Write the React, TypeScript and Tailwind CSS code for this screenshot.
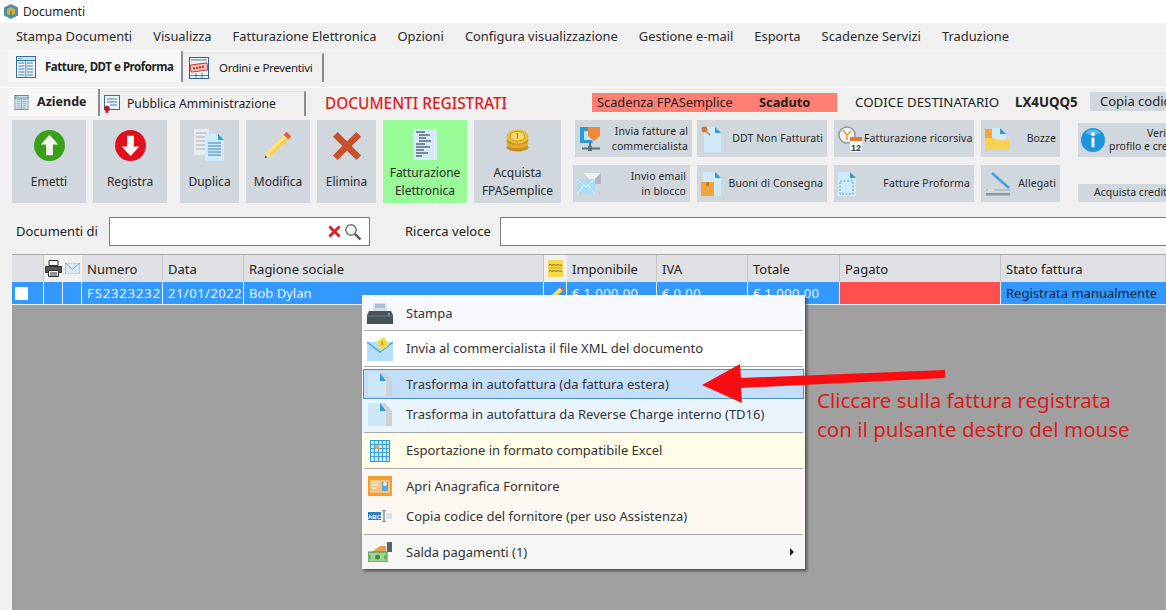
import React from 'react';

// --- icons ---
const Sheet = ({ size = 22, accent = '#2f6f9f' }: { size?: number; accent?: string }) => (
  <svg width={size} height={size} viewBox="0 0 22 22">
    <rect x="1.5" y="0.5" width="19" height="21" fill="#eef5fa" stroke={accent} />
    <rect x="1.5" y="0.5" width="19" height="4" fill="#cfe3f0" stroke={accent} />
    <path d="M3 2.500h4" stroke="#6cbf6c" />
    <path d="M3.500 7h6M3.500 10h6M3.500 13h6M3.500 16h6M3.500 19h6" stroke={accent} strokeWidth="0.9" />
    <path d="M12 7h6M12 10h6M12 13h6M12 16h6M12 19h6" stroke={accent} strokeWidth="0.9" />
    <path d="M10.800 5v16" stroke={accent} strokeWidth="0.8" />
  </svg>
);

const OrderSheet = () => (
  <svg width="20" height="22" viewBox="0 0 20 22">
    <rect x="0.500" y="0.500" width="19" height="21" fill="#eef3f7" stroke="#2f5f8f" />
    <path d="M2 3h16M7 16v5M13 16v5M1 18.500h18" stroke="#2f5f8f" strokeWidth="0.8" />
    <rect x="1.500" y="7" width="17" height="7" rx="1" transform="rotate(-8 10 10.500)" fill="#f3c9c4" stroke="#c0392b" />
    <path d="M4 11.500l12-2" stroke="#c0392b" strokeWidth="2.500" strokeDasharray="2 1" />
  </svg>
);

const PaSheet = () => (
  <svg width="18" height="20" viewBox="0 0 18 20">
    <rect x="1.500" y="1.500" width="15" height="14" fill="#eaf2f8" stroke="#3d6f96" />
    <path d="M4 5h10M4 8h10M7 11h7" stroke="#3d6f96" strokeWidth="0.9" />
    <circle cx="4" cy="14.500" r="2.800" fill="#b3202a" />
    <path d="M2.800 16.500l-.5 3 1.700-1 1.700 1-.5-3" fill="#b3202a" />
  </svg>
);

const ArrowBall = ({ fill, up }: { fill: string; up: boolean }) => (
  <svg width="31" height="31" viewBox="0 0 32 32">
    <circle cx="16" cy="16" r="16" fill={fill} />
    <path d={up ? 'M16 5l9 10h-5.500v11h-7V15H7z' : 'M16 27l9-10h-5.500V6h-7v11H7z'} fill="#f7f7ef" />
  </svg>
);

const Doc = ({ x, y, w, h, fill = '#cfeafa', fold = '#2f9ad6' }: { x: number; y: number; w: number; h: number; fill?: string; fold?: string }) => (
  <g>
    <path d={`M${x} ${y}h${w - 6}l6 6v${h - 6}h-${w}z`} fill={fill} />
    <path d={`M${x + w - 6} ${y}l6 6h-6z`} fill={fold} />
  </g>
);

const DuplicaIcon = () => (
  <svg width="31" height="32" viewBox="0 0 31 32">
    <rect x="0" y="0" width="15" height="26" fill="#e6ebee" />
    <path d="M2 4h11M2 8h11M2 12h11M2 16h11M2 20h11" stroke="#aab4ba" />
    <Doc x={11} y={5} w={19} h={27} />
    <path d="M14 14h13M14 17h13M14 20h13M14 23h13M14 26h13" stroke="#3b7fb0" />
  </svg>
);

const PencilIcon = ({ size = 32 }: { size?: number }) => (
  <svg width={size} height={size} viewBox="0 0 34 34">
    <path d="M24 6l5 5L9 29l-6 2 2-7z" fill="#f8cf45" />
    <path d="M24 6l2.500 2.500L7 27l-2-3z" fill="#fbe38a" />
    <path d="M26 3l5 5-3 3-5-5z" fill="#d9603b" />
    <path d="M5 24l4 5-6 2z" fill="#f4dcb0" />
    <path d="M3.800 28l1.600 2L3 31z" fill="#333" />
  </svg>
);

const CrossIcon = ({ size = 30, fill = '#c9502c' }: { size?: number; fill?: string }) => (
  <svg width={size} height={size} viewBox="0 0 32 32">
    <path d="M6 1l10 10L26 1l5 5-10 10 10 10-5 5-10-10L6 31l-5-5 10-10L1 6z" fill={fill} />
  </svg>
);

const FeIcon = () => (
  <svg width="24" height="31" viewBox="0 0 24 31">
    <rect width="24" height="31" fill="#d5ebf7" />
    <path d="M3 3h9M6 6h11M6 9h7M6 12h12M3 15h9M3 18h14M3 21h8M3 24h12M3 27h6" stroke="#1f2b33" strokeWidth="1.100" />
  </svg>
);

const CoinsIcon = () => (
  <svg width="23" height="23" viewBox="0 0 24 24">
    <ellipse cx="12" cy="19" rx="11.500" ry="4.500" fill="#c98f1d" />
    <ellipse cx="12" cy="15.500" rx="11.500" ry="4.500" fill="#e2b030" />
    <ellipse cx="12" cy="12" rx="11.500" ry="4.500" fill="#c98f1d" />
    <ellipse cx="12" cy="8" rx="11.500" ry="7.500" fill="#e9bc36" />
    <ellipse cx="12" cy="7.500" rx="7.500" ry="5" fill="#f6d96a" stroke="#c99a1e" />
    <path d="M12 4.500v6M10.500 5.500l1.500-1" stroke="#a87a12" fill="none" />
  </svg>
);

const MonitorIcon = () => (
  <svg width="22" height="24" viewBox="0 0 22 24">
    <path d="M1 0h20v4H5v9h8l1 3H1z" fill="#2a9ad8" />
    <rect x="5" y="4" width="12" height="9" fill="#bfe4f7" />
    <path d="M9 0h12v9l-6 5-6-5z" fill="#f0893a" />
    <path d="M11 15v5M3 21.500h18" stroke="#5f7480" strokeWidth="2" />
    <rect x="9" y="19" width="4" height="5" fill="#5f7480" />
  </svg>
);

const MailIcon = ({ w = 24, h = 18, fill = '#c5e6f8', line = '#4aa8dc' }: { w?: number; h?: number; fill?: string; line?: string }) => (
  <svg width={w} height={h} viewBox="0 0 24 18">
    <rect width="24" height="18" fill={fill} stroke={line} />
    <path d="M0 0l12 10L24 0" stroke={line} fill="none" strokeWidth="1.500" />
  </svg>
);

const BulkMailIcon = () => (
  <svg width="24" height="22" viewBox="0 0 24 22">
    <path d="M6 0h18l-9 8z" fill="#eef1f2" />
    <path d="M24 0v11H13l11-11z" fill="#aeb8bd" />
    <path d="M0 6h18v15H0z" fill="#a9dcf5" />
    <path d="M0 6l9 8 9-8M0 21l7-9M18 21l-7-9" stroke="#e8f6fd" fill="none" />
  </svg>
);

const DdtIcon = () => (
  <svg width="20" height="26" viewBox="0 0 20 26">
    <Doc x={3} y={1} w={17} h={25} />
    <circle cx="3.500" cy="3.500" r="3" fill="#d9703b" />
    <path d="M6 6l3 3" stroke="#d9703b" strokeWidth="1.500" />
  </svg>
);

const BuoniIcon = () => (
  <svg width="20" height="24" viewBox="0 0 20 24">
    <Doc x={2} y={0} w={18} h={24} />
    <rect x="0" y="10" width="13" height="14" fill="#f0a43a" />
    <rect x="5" y="10" width="3" height="4" fill="#c9782a" />
  </svg>
);

const RecursiveIcon = () => (
  <svg width="24" height="26" viewBox="0 0 24 26">
    <circle cx="9" cy="9" r="8" fill="#eef1f2" stroke="#8b969c" strokeWidth="1.500" />
    <path d="M9 9L5 4M9 9l4-4M9 9v5" stroke="#e0a13a" strokeWidth="1.500" fill="none" />
    <rect x="12" y="14" width="12" height="12" fill="#fff" />
    <rect x="12" y="11" width="12" height="4" fill="#e8772e" />
    <text x="18" y="24.500" fontSize="9" fontWeight="700" textAnchor="middle" fill="#333" fontFamily="Liberation Sans">12</text>
  </svg>
);

const FolderIcon = () => (
  <svg width="24" height="22" viewBox="0 0 24 22">
    <path d="M0 1h7v9H0z" fill="#f0a43a" />
    <Doc x={7} y={0} w={14} h={14} />
    <path d="M0 10h9l3 2h12v10H0z" fill="#f9cf55" />
  </svg>
);

const ProformaIcon = () => (
  <svg width="18" height="24" viewBox="0 0 18 24">
    <Doc x={0} y={0} w={18} h={24} />
    <rect x="2" y="9" width="13" height="13" fill="none" stroke="#5d9ec4" strokeDasharray="2 1.500" />
  </svg>
);

const ScannerIcon = () => (
  <svg width="26" height="24" viewBox="0 0 26 24">
    <path d="M7 1l17 15" stroke="#3da4dc" strokeWidth="2.500" />
    <path d="M1 17h24v2H1z" fill="#b5c1c7" />
    <path d="M1 21h24v2.500H1z" fill="#8b989f" />
    <path d="M3 18h6" stroke="#fff" />
  </svg>
);

const InfoIcon = () => (
  <svg width="24" height="24" viewBox="0 0 25 25">
    <circle cx="12.500" cy="12.500" r="12.500" fill="#1c97dd" />
    <path d="M5 5a10 10 0 0 1 15 0c-3 3-12 3-15 0z" fill="#5dbcec" />
    <circle cx="12.500" cy="6.500" r="2" fill="#fff" />
    <rect x="11" y="10" width="3" height="10" fill="#fff" />
  </svg>
);

const SearchIcon = () => (
  <svg width="18" height="18" viewBox="0 0 18 18">
    <circle cx="7" cy="7" r="5.200" fill="#f2f8fc" stroke="#6a7478" strokeWidth="1.500" />
    <path d="M11 11l5.500 5.500" stroke="#4b5357" strokeWidth="2.400" />
  </svg>
);

const PrinterIcon = () => (
  <svg width="17" height="17" viewBox="0 0 17 17">
    <path d="M4 .5h9v5H4z" fill="#f4f4f4" stroke="#333" />
    <path d="M.5 6.500h16v6H.5z" fill="#555" stroke="#333" />
    <path d="M3.500 10.500h10v6h-10z" fill="#f4f4f4" stroke="#333" />
    <path d="M5 13h7M5 15h7" stroke="#333" />
  </svg>
);

const NoteIcon = () => (
  <svg width="15" height="17" viewBox="0 0 15 17">
    <rect width="15" height="17" rx="1" fill="#f7d84a" />
    <path d="M1 5c2-1.500 2 1 4 0s2 1 4 0 2 1 5 0M1 11c2-1.500 2 1 4 0s2 1 4 0 2 1 5 0" stroke="#6b5a10" fill="none" strokeWidth="0.900" />
    <path d="M1 8h13" stroke="#c9a72a" />
  </svg>
);

const PrinterBigIcon = () => (
  <svg width="26" height="21" viewBox="0 0 26 21">
    <path d="M6 0h14v8H6z" fill="#d8dee2" />
    <path d="M8 2h10M8 4h10" stroke="#6fa7c8" />
    <path d="M2 8h22l2 4v9H0v-9z" fill="#46535b" />
    <path d="M0 13h26" stroke="#6d7a82" />
    <circle cx="22" cy="11" r="1" fill="#9fc54a" />
  </svg>
);

const MailNoteIcon = () => (
  <svg width="26" height="24" viewBox="0 0 26 24">
    <rect x="0" y="5" width="26" height="19" fill="#b5dff6" />
    <path d="M0 5l13 10L26 5" stroke="#4aa8dc" fill="none" strokeWidth="1.500" />
    <path d="M10 4l7-4 5 8-8 6z" fill="#f6d84d" />
    <path d="M15 4v4" stroke="#8a7414" />
  </svg>
);

const AutofatturaIcon = () => (
  <svg width="24" height="24" viewBox="0 0 24 24">
    <path d="M10 1h7l7 8v15H10z" fill="#ccd2d6" />
    <path d="M0 1h12l6 8v15H0z" fill="#cde8f8" />
    <path d="M12 1v8h6z" fill="#2f9ad6" />
  </svg>
);

const ExcelIcon = () => (
  <svg width="20" height="22" viewBox="0 0 20 22">
    <rect x=".5" y=".5" width="19" height="21" fill="#cbe8f8" stroke="#2f9ad6" />
    <path d="M4.500 0v22M8.500 0v22M12.500 0v22M16.500 0v22M0 4.500h20M0 8.500h20M0 12.500h20M0 16.500h20" stroke="#2f9ad6" strokeWidth="0.900" />
    <rect x="5" y="5" width="4" height="4" fill="#f0a43a" />
  </svg>
);

const CardIcon = () => (
  <svg width="24" height="20" viewBox="0 0 24 20">
    <rect width="24" height="20" fill="#f0a032" />
    <rect x="2" y="4" width="20" height="13" fill="#f7c27a" />
    <path d="M3 6h8M3 9h8M3 12h6" stroke="#fff" />
    <rect x="14" y="6" width="6" height="9" fill="#5aa9d6" />
    <circle cx="17" cy="8" r="2" fill="#e8f3f9" />
  </svg>
);

const AbcIcon = () => (
  <svg width="24" height="12" viewBox="0 0 24 12">
    <rect x="0" y="2" width="13" height="8" fill="#2f7fc0" />
    <text x="6.500" y="8.500" fontSize="6" fontWeight="700" textAnchor="middle" fill="#fff" fontFamily="Liberation Sans">ABC</text>
    <path d="M14 0h4M14 12h4M16 0v12" stroke="#555" />
    <rect x="18" y="3" width="6" height="6" fill="#d5e6f1" />
  </svg>
);

const PayIcon = () => (
  <svg width="25" height="20" viewBox="0 0 25 20">
    <rect x="19" y="0" width="5" height="10" fill="#5b6469" />
    <path d="M5 9l7-5h6v7H5z" fill="#e8a14e" />
    <rect x="0" y="10" width="19" height="10" fill="#9fd39a" stroke="#3f8f3f" />
    <circle cx="9.500" cy="15" r="2.500" fill="#3f8f3f" />
    <path d="M2 13v4M17 13v4" stroke="#3f8f3f" />
  </svg>
);

// --- pieces ---
const ToolButton = ({ w, label, icon, green, two }: { w: string; label: React.ReactNode; icon: React.ReactNode; green?: boolean; two?: boolean }) => (
  <div className={`${w} h-[83px] shrink-0 flex flex-col items-center text-center text-[12px] leading-[18px] text-[#2b2b2b] ${green ? 'bg-[#98fb98]' : 'bg-[#d0d8dd]'}`}>
    <div className={`h-[41px] w-full flex justify-center shrink-0 ${two ? 'pt-[9px]' : 'items-end'}`}>{icon}</div>
    <div className={two ? 'pt-[3px]' : 'pt-[12px]'}>{label}</div>
  </div>
);

const SmallButton = ({ w, icon, label }: { w: string; icon: React.ReactNode; label: React.ReactNode }) => (
  <div className={`${w} h-[37px] shrink-0 bg-[#d0d8dd] flex items-center pl-[4px] pr-[4px] text-[10.500px] tracking-[0.1px] leading-[15px] text-[#2b2b2b]`}>
    <div className="w-[26px] flex shrink-0">{icon}</div>
    <div className="flex-1 text-right whitespace-nowrap">{label}</div>
  </div>
);

const HeaderCell = ({ w, children, plain }: { w: string; children?: React.ReactNode; plain?: boolean }) => (
  <div className={`${w} shrink-0 flex items-center ${plain ? 'bg-[#f0f0f0] justify-center' : 'pl-[5px] pt-[2px] border-r border-[#c4c6ca]'}`}>{children}</div>
);

const RowCell = ({ w, children, cls = '' }: { w: string; children?: React.ReactNode; cls?: string }) => (
  <div className={`${w} shrink-0 flex items-center pl-[5px] pt-px border-r border-[#e6f0fa] whitespace-nowrap ${cls}`}>{children}</div>
);

const Sep = () => <div className="h-px bg-[#a9a9a9] mx-[2px] shrink-0" />;

const MenuItem = ({ icon, label, h, bg, active, chevron }: { icon: React.ReactNode; label: string; h: string; bg: string; active?: boolean; chevron?: boolean }) => (
  <div className={`${h} ${bg} flex items-center shrink-0 ${active ? 'border border-[#4a90d0] mx-px' : ''}`}>
    <div className={`w-[32px] mr-[10px] flex justify-center shrink-0 ${active ? '' : 'ml-[2px]'}`}>{icon}</div>
    <span className="flex-1 pt-px text-[#333]">{label}</span>
    {chevron && <span className="w-0 h-0 mr-[11px] border-y-[4px] border-y-transparent border-l-[4px] border-l-[#222]" />}
  </div>
);

export default function App() {
  return (
    <div className="relative w-[1166px] h-[610px] overflow-hidden bg-[#f0f0f0] font-['Noto_Sans',sans-serif] text-[13px] text-[#222] flex flex-col">
      {/* title bar */}
      <div className="h-[23px] shrink-0 bg-white flex items-center pl-[4px] gap-[5px] text-[12px]">
        <svg width="14" height="15" viewBox="0 0 14 15">
          <path d="M7 0l7 3.500v8L7 15l-7-3.500v-8z" fill="#4f8fa8" />
          <path d="M3 5l4-2 4 2v5l-4 2-4-2z" fill="#c9b04a" />
          <path d="M7 7v5" stroke="#2f6f4f" />
        </svg>
        <span>Documenti</span>
      </div>

      {/* menu */}
      <div className="h-[27px] shrink-0 flex items-center pl-[16px] pt-px gap-[21px] text-[12.900px] text-[#2b2b2b]">
        {['Stampa Documenti', 'Visualizza', 'Fatturazione Elettronica', 'Opzioni', 'Configura visualizzazione', 'Gestione e-mail', 'Esporta', 'Scadenze Servizi', 'Traduzione'].map((m) => (
          <span key={m}>{m}</span>
        ))}
      </div>

      {/* top tabs */}
      <div className="h-[32px] shrink-0 flex items-end pl-[8px] border-t border-white">
        <div className="w-[175px] h-[31px] bg-[#f7f7f7] flex items-center pl-[7px] gap-[8px] border-r-2 border-[#8c8c8c]">
          <Sheet />
          <span className="font-bold text-[11.500px] tracking-[-0.45px] text-[#222] whitespace-nowrap">Fatture, DDT e Proforma</span>
        </div>
        <div className="w-[141px] h-[29px] bg-[#f0f0f0] border-t border-[#e2e2e2] flex items-center pl-[6px] gap-[10px] border-r-2 border-r-[#8c8c8c] text-[11.500px]">
          <OrderSheet />
          <span className="tracking-[-0.3px] whitespace-nowrap">Ordini e Preventivi</span>
        </div>
      </div>

      {/* second tabs + status */}
      <div className="h-[33px] shrink-0 mt-[5px] flex items-end pl-[8px] pb-[4px] border-t border-white">
        <div className="w-[92px] h-[27px] shrink-0 bg-[#f7f7f7] flex items-center pl-[6px] gap-[8px] border-r-2 border-[#8c8c8c]">
          <Sheet size={15} />
          <span className="font-bold text-[12.500px]">Aziende</span>
        </div>
        <div className="w-[206px] h-[25px] shrink-0 flex items-center pl-[3px] gap-[6px] border-r-2 border-[#8c8c8c] border-t border-t-[#e2e2e2]">
          <PaSheet />
          <span className="text-[12.200px] whitespace-nowrap">Pubblica Amministrazione</span>
        </div>
        <div className="w-[286px] shrink-0 pl-[19px] h-[25px] flex items-center text-[#e21b1b] font-medium text-[15.400px] whitespace-nowrap">DOCUMENTI REGISTRATI</div>
        <div className="w-[245px] h-[19px] shrink-0 mb-[4px] bg-[#ff7f74] flex items-center pl-[5px] text-[12.800px] whitespace-nowrap">
          <span className="w-[162px]">Scadenza FPASemplice</span>
          <span className="font-bold">Scaduto</span>
        </div>
        <div className="w-[253px] h-[19px] shrink-0 mb-[4px] pl-[18px] flex items-center text-[13.300px] whitespace-nowrap">
          <span className="w-[160px]">CODICE DESTINATARIO</span>
          <span className="font-bold">LX4UQQ5</span>
        </div>
        <div className="w-[90px] h-[19px] shrink-0 mb-[5px] bg-[#d0d8dd] pl-[10px] flex items-center whitespace-nowrap overflow-hidden">Copia codice</div>
      </div>

      {/* toolbar */}
      <div className="h-[83px] shrink-0 flex pl-[12px]">
        <ToolButton w="w-[74px]" label="Emetti" icon={<ArrowBall fill="#3aa01a" up />} />
        <div className="w-[7px] shrink-0" />
        <ToolButton w="w-[74px]" label="Registra" icon={<ArrowBall fill="#e0101e" up={false} />} />
        <div className="w-[13px] shrink-0" />
        <ToolButton w="w-[59px]" label="Duplica" icon={<DuplicaIcon />} />
        <div className="w-[7px] shrink-0" />
        <ToolButton w="w-[64px]" label="Modifica" icon={<PencilIcon />} />
        <div className="w-[7px] shrink-0" />
        <ToolButton w="w-[59px]" label="Elimina" icon={<CrossIcon />} />
        <div className="w-[7px] shrink-0" />
        <ToolButton w="w-[84px]" green two label={<>Fatturazione<br />Elettronica</>} icon={<FeIcon />} />
        <div className="w-[7px] shrink-0" />
        <ToolButton w="w-[87px]" two label={<>Acquista<br />FPASemplice</>} icon={<CoinsIcon />} />

        <div className="ml-[12px] shrink-0 flex flex-col justify-between pb-[1px]">
          <div className="ml-[2px]">
            <SmallButton w="w-[117px]" icon={<MonitorIcon />} label={<>Invia fatture al<br />commercialista</>} />
          </div>
          <SmallButton w="w-[117px]" icon={<BulkMailIcon />} label={<>Invio email<br />in blocco</>} />
        </div>
        <div className="ml-[5px] shrink-0 flex flex-col justify-between pb-[1px]">
          <SmallButton w="w-[130px]" icon={<DdtIcon />} label="DDT Non Fatturati" />
          <SmallButton w="w-[130px]" icon={<BuoniIcon />} label="Buoni di Consegna" />
        </div>
        <div className="ml-[7px] shrink-0 flex flex-col justify-between pb-[1px]">
          <SmallButton w="w-[140px]" icon={<RecursiveIcon />} label="Fatturazione ricorsiva" />
          <SmallButton w="w-[140px]" icon={<ProformaIcon />} label="Fatture Proforma" />
        </div>
        <div className="ml-[7px] shrink-0 flex flex-col justify-between pb-[1px]">
          <SmallButton w="w-[79px]" icon={<FolderIcon />} label="Bozze" />
          <SmallButton w="w-[79px]" icon={<ScannerIcon />} label="Allegati" />
        </div>
        <div className="ml-[18px] w-[120px] shrink-0 flex flex-col justify-between pt-[3px] pb-[1px] text-[10.500px] text-[#2b2b2b]">
          <div className="h-[34px] bg-[#d0d8dd] flex items-center pl-[3px] gap-[4px] leading-[13px] whitespace-nowrap">
            <InfoIcon />
            <div>
              <div className="pl-[38px]">Verifica</div>
              <div>profilo e crediti</div>
            </div>
          </div>
          <div className="h-[18px] bg-[#d0d8dd] pl-[16px] flex items-center whitespace-nowrap">Acquista crediti</div>
        </div>
      </div>

      {/* search row */}
      <div className="h-[29px] shrink-0 mt-[14px] flex items-center pl-[16px]">
        <span className="w-[93px] shrink-0 pt-px">Documenti di</span>
        <div className="w-[261px] h-[29px] shrink-0 bg-white border border-[#7a7a7a] flex items-center justify-end pr-[7px] gap-[3px]">
          <CrossIcon size={13} fill="#d61f26" />
          <SearchIcon />
        </div>
        <span className="ml-[35px] w-[95px] shrink-0 pt-px">Ricerca veloce</span>
        <div className="flex-1 h-[29px] bg-white border border-[#7a7a7a] border-r-0" />
      </div>

      {/* grid */}
      <div className="flex-1 mt-[8px] ml-[12px] flex flex-col bg-[#a0a0a0] min-h-0">
        <div className="h-[28px] shrink-0 flex bg-[#dfe1e5] border-t border-[#a9a9a9]">
          <HeaderCell w="w-[32px]" />
          <HeaderCell w="w-[19px]" plain><PrinterIcon /></HeaderCell>
          <HeaderCell w="w-[19px]" plain><MailIcon w={15} h={11} fill="#dbe9f3" line="#7fa4bd" /></HeaderCell>
          <HeaderCell w="w-[81px]">Numero</HeaderCell>
          <HeaderCell w="w-[81px]">Data</HeaderCell>
          <HeaderCell w="w-[300px]">Ragione sociale</HeaderCell>
          <HeaderCell w="w-[23px]" plain><NoteIcon /></HeaderCell>
          <HeaderCell w="w-[90px]">Imponibile</HeaderCell>
          <HeaderCell w="w-[91px]">IVA</HeaderCell>
          <HeaderCell w="w-[92px]">Totale</HeaderCell>
          <HeaderCell w="w-[161px]">Pagato</HeaderCell>
          <HeaderCell w="flex-1">Stato fattura</HeaderCell>
        </div>
        <div className="h-[23px] shrink-0 flex bg-[#3399ff] text-[#e8f3ff] border-b border-[#e6f0fa]">
          <RowCell w="w-[32px]"><span className="w-[13px] h-[13px] bg-white -ml-[2px]" /></RowCell>
          <RowCell w="w-[19px]" />
          <RowCell w="w-[19px]" />
          <RowCell w="w-[81px]" cls="tracking-[0.9px]">FS2323232</RowCell>
          <RowCell w="w-[81px]" cls="tracking-[0.5px]">21/01/2022</RowCell>
          <RowCell w="w-[300px]">Bob Dylan</RowCell>
          <RowCell w="w-[23px]"><span className="-ml-[3px]"><PencilIcon size={20} /></span></RowCell>
          <RowCell w="w-[90px]" cls="tracking-[0.4px] pt-[2px]">€ 1.000,00</RowCell>
          <RowCell w="w-[91px]" cls="tracking-[0.4px] pt-[2px]">€ 0,00</RowCell>
          <RowCell w="w-[92px]" cls="tracking-[0.4px] pt-[2px]">€ 1.000,00</RowCell>
          <RowCell w="w-[161px]" cls="bg-[#ff5050]" />
          <RowCell w="flex-1" cls="text-[#10233a] border-r-0">Registrata manualmente</RowCell>
        </div>
      </div>

      {/* context menu */}
      <div className="absolute left-[362px] top-[295px] w-[443px] h-[274px] bg-white flex flex-col pt-px shadow-[2px_2px_3px_rgba(50,50,50,0.75)]">
        <MenuItem h="h-[34px]" bg="bg-[#f7f9fe]" icon={<PrinterBigIcon />} label="Stampa" />
        <Sep />
        <MenuItem h="h-[35px]" bg="bg-white" icon={<MailNoteIcon />} label="Invia al commercialista il file XML del documento" />
        <Sep />
        <div className="h-[2px] shrink-0" />
        <MenuItem h="h-[30px]" bg="bg-[#c2def9]" active icon={<AutofatturaIcon />} label="Trasforma in autofattura (da fattura estera)" />
        <MenuItem h="h-[30px]" bg="bg-[#eaf4fd]" icon={<AutofatturaIcon />} label="Trasforma in autofattura da Reverse Charge interno (TD16)" />
        <div className="h-[3px] shrink-0 bg-[#eaf4fd]" />
        <Sep />
        <MenuItem h="h-[35px]" bg="bg-[#fffde8]" icon={<ExcelIcon />} label="Esportazione in formato compatibile Excel" />
        <Sep />
        <MenuItem h="h-[34px]" bg="bg-[#fdf9f2]" icon={<CardIcon />} label="Apri Anagrafica Fornitore" />
        <MenuItem h="h-[26px]" bg="bg-[#fdf9f2]" icon={<AbcIcon />} label="Copia codice del fornitore (per uso Assistenza)" />
        <div className="h-[5px] shrink-0 bg-[#fdf9f2]" />
        <Sep />
        <MenuItem h="h-[34px]" bg="bg-[#f6f6f6]" icon={<PayIcon />} label="Salda pagamenti (1)" chevron />
      </div>

      {/* annotation */}
      <svg className="absolute left-[695px] top-[360px]" width="255" height="48" viewBox="0 0 255 48">
        <path d="M7 25L45 4l1 14 204-8v8L46 28l1 15z" fill="#f70d12" />
      </svg>
      <div className="absolute left-[817px] top-[386px] text-[20.500px] leading-[29px] text-[#d91c1c] whitespace-nowrap">
        Cliccare sulla fattura registrata
        <br />
        con il pulsante destro del mouse
      </div>
    </div>
  );
}
